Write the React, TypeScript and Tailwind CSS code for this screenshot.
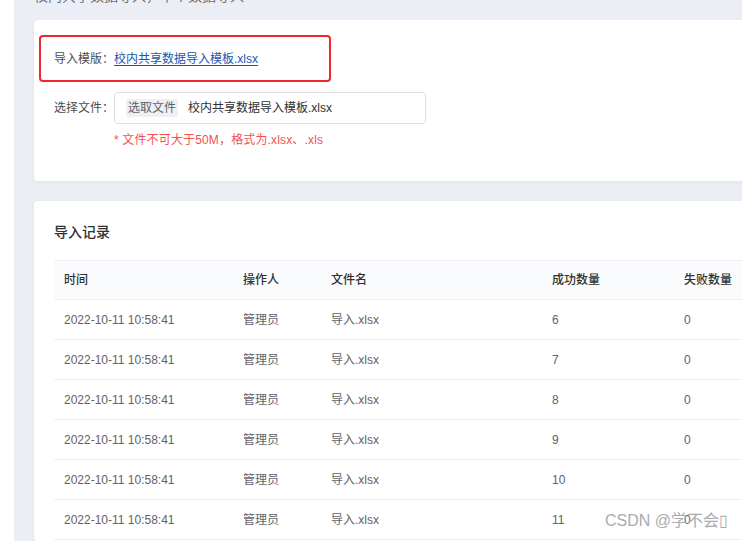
import React from "react";

const rows = [6, 7, 8, 9, 10, 11];

export default function App() {
  const font = { fontFamily: '"Liberation Sans","Noto Sans CJK SC",sans-serif' };
  return (
    <div
      className="relative w-[742px] h-[541px] overflow-hidden bg-white flex"
      style={font}
    >
      <div className="w-[14px] shrink-0 bg-white" />
      <div className="flex-1 bg-[#eceef5] pl-[20px] flex flex-col">
        <div className="h-[20px] overflow-hidden">
          <p className="text-[14px] leading-[14px] -mt-[11px] text-[#6b6f7a] whitespace-nowrap">
            校内共享数据导入，单个数据导入
          </p>
        </div>
        {/* card 1 */}
        <div className="w-[760px] bg-white rounded-[4px] shadow-[0_1px_4px_rgba(0,0,0,0.06)] pt-[15px] pb-[33px] pl-[5px]">
          <div className="w-[292px] h-[47px] border-2 border-[#f0282d] rounded-[4px] flex items-center pl-[13px] text-[12px]">
            <span className="text-[#4a4d55]">导入模版：</span>
            <a className="text-[#1a56b0] underline underline-offset-2">校内共享数据导入模板.xlsx</a>
          </div>
          <div className="mt-[10px] pl-[15px] flex items-center text-[12px]">
            <span className="w-[60px] text-[#4a4d55]">选择文件：</span>
            <div className="w-[312px] h-[32px] border border-[#dcdfe6] rounded-[4px] flex items-center pl-[11px]">
              <span className="h-[18px] px-[2px] bg-[#eef0f4] text-[#606266] rounded-[2px] flex items-center">选取文件</span>
              <span className="ml-[10px] text-[#303133]">校内共享数据导入模板.xlsx</span>
            </div>
          </div>
          <div className="mt-[8px] pl-[75px] text-[12px] leading-[16px] tracking-[0.15px] text-[#f45050]">
            * 文件不可大于50M，格式为.xlsx、.xls
          </div>
        </div>
        {/* card 2 */}
        <div className="mt-[20px] w-[760px] flex-1 bg-white rounded-[4px] shadow-[0_1px_4px_rgba(0,0,0,0.06)] pt-[22px] pl-[20px]">
          <div className="text-[14px] leading-[18px] font-medium text-[#303133]">导入记录</div>
          <div className="mt-[19px] text-[12px]">
            <div className="flex h-[40px] items-center bg-[#fafbfd] border-t border-b border-[#ebeef5] font-medium text-[#303133]">
              <div className="w-[179px] pl-[10px]">时间</div>
              <div className="w-[88px] pl-[10px]">操作人</div>
              <div className="w-[221px] pl-[10px]">文件名</div>
              <div className="w-[132px] pl-[10px]">成功数量</div>
              <div className="w-[100px] pl-[10px]">失败数量</div>
            </div>
            {rows.map((n) => (
              <div key={n} className="flex h-[40px] items-center border-b border-[#ebeef5] text-[#606266]">
                <div className="w-[179px] pl-[10px]">2022-10-11 10:58:41</div>
                <div className="w-[88px] pl-[10px]">管理员</div>
                <div className="w-[221px] pl-[10px]">导入.xlsx</div>
                <div className="w-[132px] pl-[10px]">{n}</div>
                <div className="w-[100px] pl-[10px]">0</div>
              </div>
            ))}
          </div>
        </div>
      </div>
      <div className="absolute right-[14px] bottom-[11px] text-[16px] leading-[18px] text-[#a9abb0] whitespace-nowrap">
        CSDN @学不会▯
      </div>
    </div>
  );
}
